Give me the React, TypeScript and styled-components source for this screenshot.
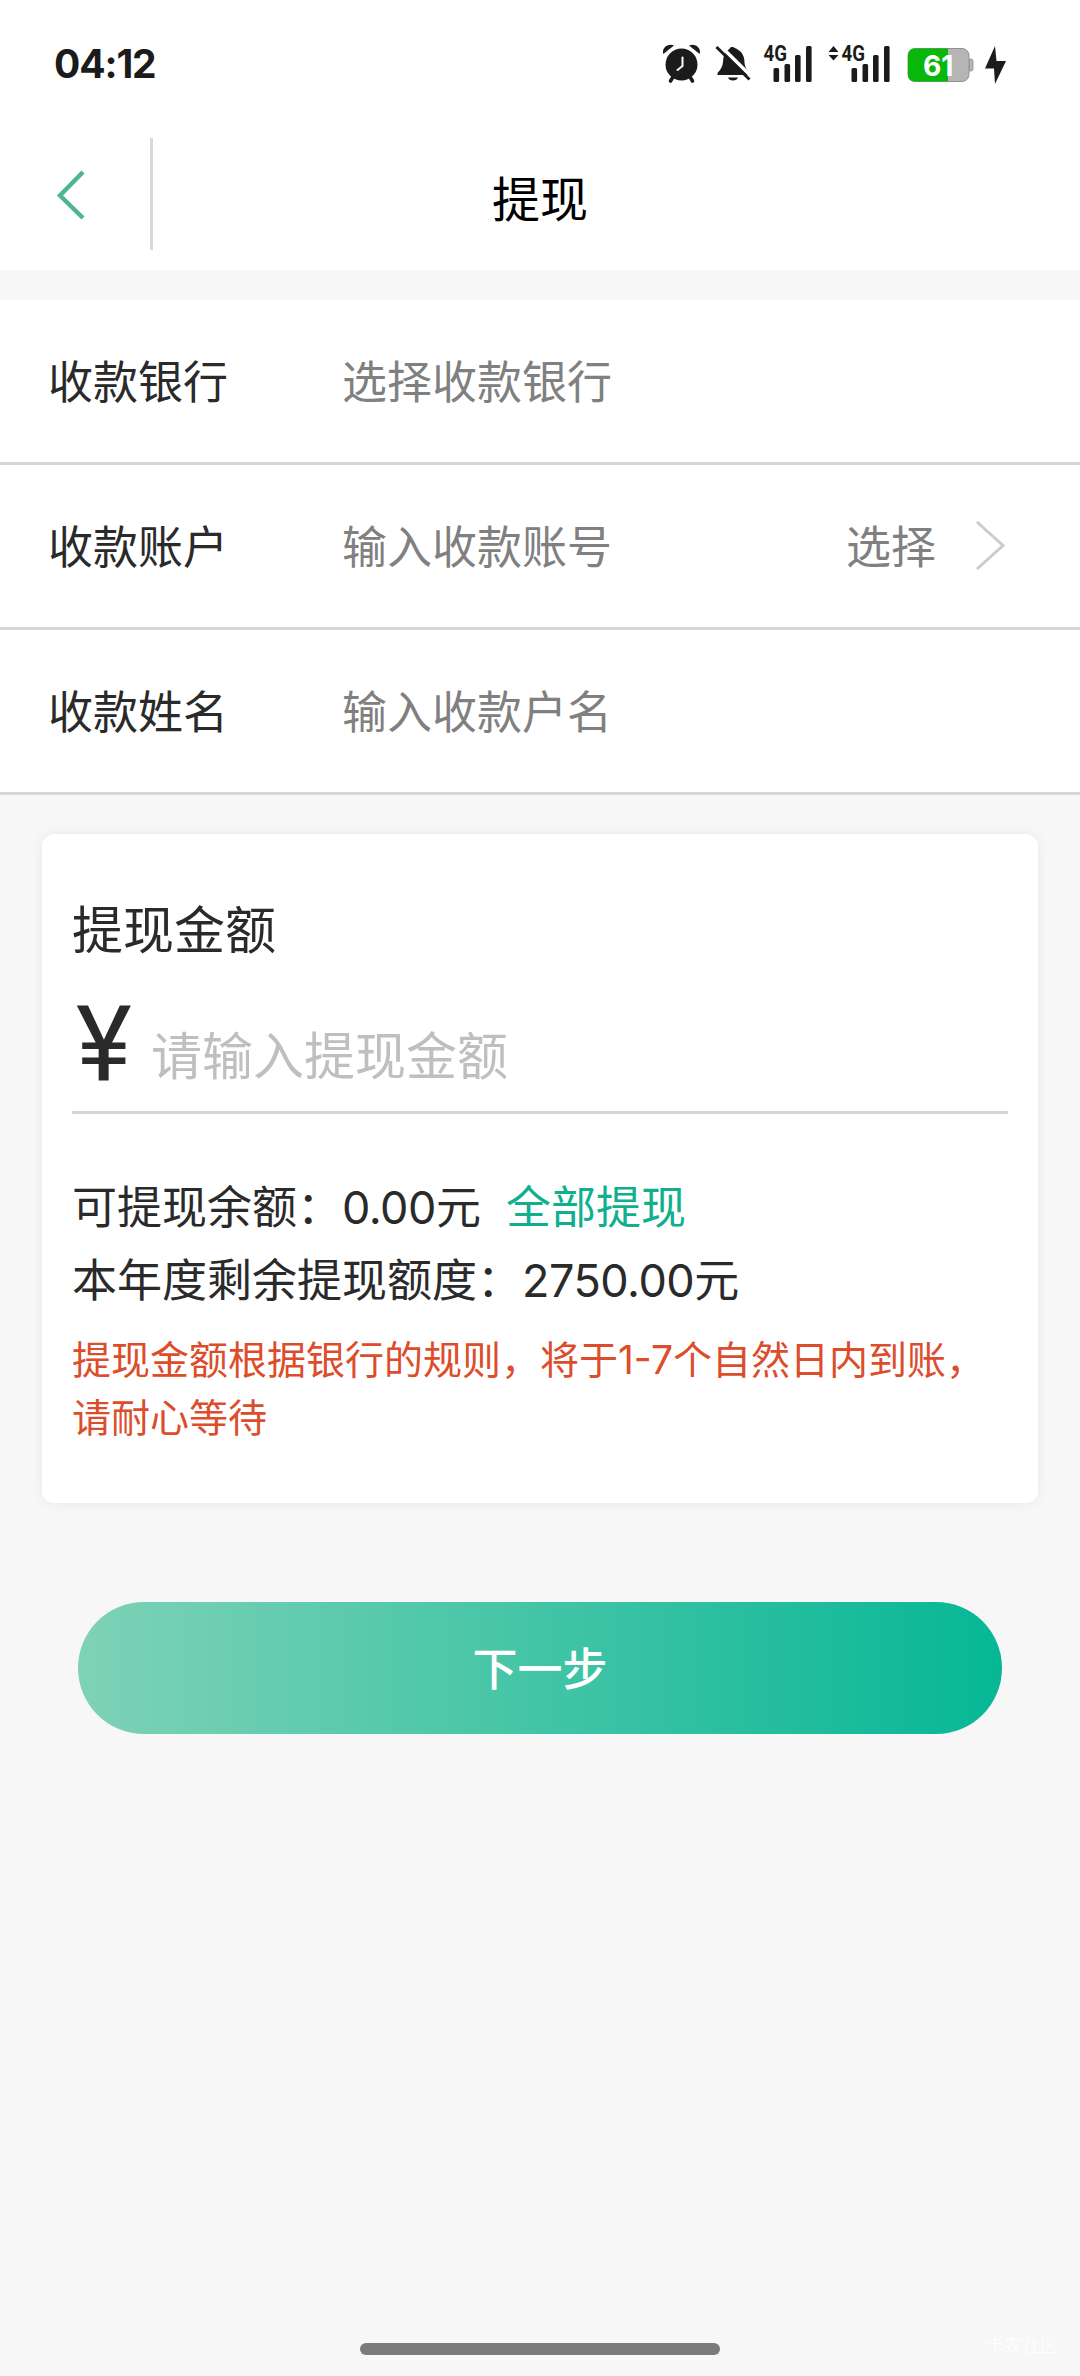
import React from "react";
import styled, { createGlobalStyle } from "styled-components";

const cjk = `"Noto Sans CJK SC", sans-serif`;

const GlobalStyle = createGlobalStyle`
  * { box-sizing: border-box; }
  body { margin: 0; background: #f7f7f7; font-family: ${cjk}; }
`;

const Screen = styled.div`
  width: 1080px;
  height: 2376px;
  display: flex;
  flex-direction: column;
  background: #f7f7f7;
  color: #2a2a2a;
  overflow: hidden;
`;

const StatusBar = styled.div`
  height: 128px;
  flex: none;
  background: #fff;
  display: flex;
  align-items: center;
  justify-content: space-between;
  padding-left: 54px;
`;

const Clock = styled.span`
  font: 700 39px/40px Inter, sans-serif;
  letter-spacing: -1.1px;
  color: #1b1b1b;
`;

const StatusIcons = styled.svg`
  display: block;
  width: 400px;
  height: 70px;
  margin-right: 40px;
  margin-top: 2px;
`;

const NavBar = styled.header`
  height: 142px;
  flex: none;
  background: #fff;
  display: grid;
  grid-template-columns: 153px 1fr 153px;
  align-items: center;
`;

const BackButton = styled.button`
  height: 112px;
  align-self: end;
  margin: 0 0 20px;
  padding: 2px 0 0 56px;
  border: 0;
  border-right: 3px solid #d9d9d9;
  background: none;
  display: flex;
  align-items: center;
`;

const Title = styled.h1`
  margin: 0;
  padding-bottom: 7px;
  font: 400 48px/60px ${cjk};
  text-align: center;
  color: #000;
`;

const Form = styled.section`
  margin-top: 30px;
  flex: none;
`;

const FormRow = styled.div`
  height: 165px;
  background: #fff;
  border-bottom: 3px solid #d6d6d6;
  display: flex;
  align-items: center;
  padding: 0 74px 2px 48px;
  font-size: 45px;
  line-height: 66px;
`;

const Label = styled.span`
  width: 294px;
`;

const Placeholder = styled.span`
  flex: 1;
  color: #808080;
`;

const Pick = styled.span`
  color: #808080;
  margin-right: 38px;
`;

const Card = styled.section`
  margin: 39px 42px 0;
  height: 669px;
  flex: none;
  padding: 60px 30px 0;
  border-radius: 12px;
  background: #fff;
  box-shadow: 0 0 12px rgba(0, 0, 0, 0.07);
`;

const CardTitle = styled.h2`
  margin: 0;
  font: 400 51px/66px ${cjk};
`;

const AmountInput = styled.div`
  height: 154px;
  border-bottom: 3px solid #d6d6d6;
  display: flex;
  align-items: flex-start;
`;

const Currency = styled.span`
  width: 79px;
  padding-left: 4px;
  font-family: Roboto, sans-serif;
  font-size: 106px;
  line-height: 170px;
`;

const AmountHint = styled.span`
  margin-top: 60px;
  font-size: 51px;
  line-height: 66px;
  color: #bfbfbf;
`;

const Details = styled.div`
  padding-top: 57px;
  font: 400 45px/73px Inter, ${cjk};
`;

const Detail = styled.div`
  height: 73px;
  display: flex;
  white-space: nowrap;
`;

const Figure = styled.span`
  letter-spacing: -0.5px;
`;

const AllLink = styled.a`
  margin-left: 25px;
  color: #10b08c;
`;

const Notice = styled.p`
  margin: 14px 0 0;
  font: 400 39px/58px Inter, ${cjk};
  color: #dc4d2b;
  white-space: nowrap;
`;

const NextButton = styled.button`
  margin: 99px 78px 0;
  height: 132px;
  flex: none;
  padding: 0 0 2px;
  border: 0;
  border-radius: 66px;
  background: linear-gradient(90deg, #7fd2b6, #06b796);
  color: #fff;
  font: 500 45px/66px ${cjk};
`;

const Footer = styled.footer`
  margin-top: auto;
  height: 45px;
  flex: none;
  display: grid;
  grid-template-columns: 360px 360px 1fr;
  align-items: start;
`;

const HomeBar = styled.div`
  grid-column: 2;
  height: 12px;
  margin-top: 12px;
  border-radius: 6px;
  background: #7b7b7b;
`;

const Watermark = styled.span`
  justify-self: end;
  margin-right: 22px;
  font-size: 18px;
  line-height: 26px;
  color: #fdfdfd;
`;

const SignalBars = ({ x }: { x: number }) => (
  <g fill="#1b1b1b">
    <rect x={x} y="38" width="5.6" height="14" rx="1.5" />
    <rect x={x + 11} y="34" width="5.6" height="18" rx="1.5" />
    <rect x={x + 21.5} y="25" width="5.6" height="27" rx="1.5" />
    <rect x={x + 32.5} y="16" width="5.6" height="36" rx="1.5" />
    <text x={x - 10} y="31" fontFamily="Roboto" fontSize="21.5" fontWeight="700" textLength="23.5" lengthAdjust="spacingAndGlyphs">4G</text>
  </g>
);

const StatusGlyphs = () => (
  <StatusIcons viewBox="0 0 400 70">
    <g stroke="#1b1b1b" strokeLinecap="round" fill="none">
      <path d="M33 47l-2.500 4M50 47l2.500 4" strokeWidth="3.6" />
      <circle cx="41.5" cy="34.5" r="16" fill="#1b1b1b" stroke="none" />
      <path d="M23.300 24C21.500 18 28 13 34 15.500ZM59.700 24C61.500 18 55 13 49 15.500Z" fill="#1b1b1b" stroke="none" />
      <path d="M42.500 27.500v8.500l-5 4" stroke="#fff" strokeWidth="2" />
    </g>
    <path d="M93 17q4 1.500 8 5q3.500 4 3.500 11q.5 5 5 10v2H77.500v-2q5-5 5.500-11q0-8 5-12q2-1.500 3-3Z" fill="#1b1b1b" />
    <path d="M88 47.500h10q-1 3-5 3t-5-3Z" fill="#1b1b1b" />
    <path d="M79 14.500L111 46" stroke="#fff" strokeWidth="3.500" />
    <path d="M76.500 17L109.500 49.500" stroke="#1b1b1b" strokeWidth="3" />
    <SignalBars x={133.5} />
    <path d="M188.500 22l5-6 5 6ZM188.500 25l5 5.500 5-5.500Z" fill="#1b1b1b" />
    <SignalBars x={211.5} />
    <rect x="268" y="18.500" width="61" height="33" rx="7" fill="#b5b5b5" stroke="#909090" />
    <path d="M329.500 29h1.500q2 0 2 2v8q0 2-2 2h-1.500Z" fill="#b5b5b5" stroke="#909090" strokeWidth=".8" />
    <path d="M308 18.500v33H275q-7 0-7-7v-19q0-7 7-7Z" fill="#07b80b" />
    <text x="283" y="46" fill="#fff" fontFamily="Inter" fontWeight="700" fontSize="29" textLength="30.5" lengthAdjust="spacingAndGlyphs">61</text>
    <path d="M355 16L345 38.500h9L355 54l11-23h-9.500Z" fill="#1b1b1b" />
  </StatusIcons>
);

export default function App() {
  return (
    <>
      <GlobalStyle />
      <Screen>
        <StatusBar>
          <Clock>04:12</Clock>
          <StatusGlyphs />
        </StatusBar>
        <NavBar>
          <BackButton aria-label="返回">
            <svg width="32" height="52" viewBox="0 0 32 52" fill="none">
              <path d="M27 3L4 26.500 27 49" stroke="#4db591" strokeWidth="4.400" />
            </svg>
          </BackButton>
          <Title>提现</Title>
        </NavBar>
        <Form>
          <FormRow>
            <Label>收款银行</Label>
            <Placeholder>选择收款银行</Placeholder>
          </FormRow>
          <FormRow>
            <Label>收款账户</Label>
            <Placeholder>输入收款账号</Placeholder>
            <Pick>选择</Pick>
            <svg width="32" height="52" viewBox="0 0 32 52" fill="none">
              <path d="M3 3L29 26.500 3 50" stroke="#cccccc" strokeWidth="3" />
            </svg>
          </FormRow>
          <FormRow>
            <Label>收款姓名</Label>
            <Placeholder>输入收款户名</Placeholder>
          </FormRow>
        </Form>
        <Card>
          <CardTitle>提现金额</CardTitle>
          <AmountInput>
            <Currency>¥</Currency>
            <AmountHint>请输入提现金额</AmountHint>
          </AmountInput>
          <Details>
            <Detail>
              可提现余额：<Figure>0.00</Figure>元<AllLink>全部提现</AllLink>
            </Detail>
            <Detail>
              本年度剩余提现额度：<Figure>2750.00</Figure>元
            </Detail>
          </Details>
          <Notice>
            提现金额根据银行的规则，将于1-7个自然日内到账，
            <br />
            请耐心等待
          </Notice>
        </Card>
        <NextButton>下一步</NextButton>
        <Footer>
          <HomeBar />
          <Watermark>卡农社区</Watermark>
        </Footer>
      </Screen>
    </>
  );
}
